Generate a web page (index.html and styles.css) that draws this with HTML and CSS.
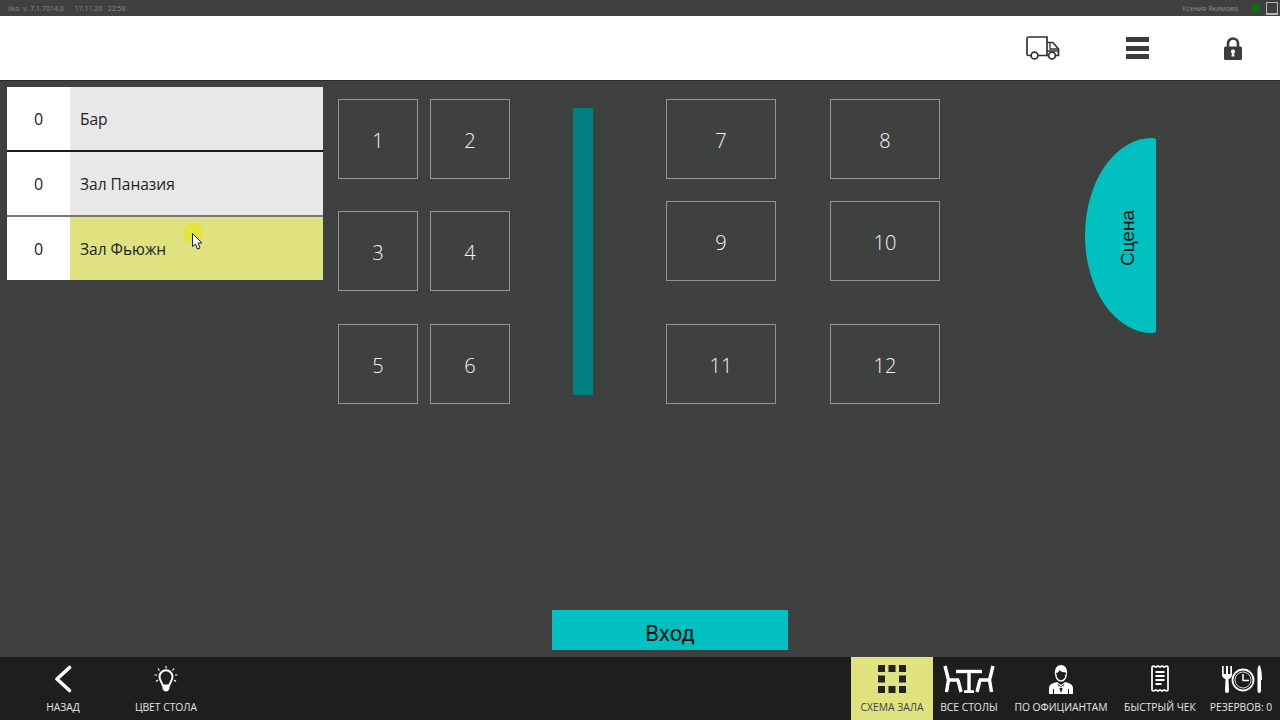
FILE: index.html
```html
<!DOCTYPE html>
<html lang="ru">
<head>
    <meta charset="UTF-8">
    <title>iiko</title>
    <link rel="stylesheet" href="styles.css">
</head>
<body>
    <div class="status-bar">
        <div class="status-left">
            <span>iiko&nbsp; v. 7.1.7014.0</span>
            <span class="status-date">17.11.20&nbsp;&nbsp; 22:58</span>
        </div>
        <div class="status-right">
            <span>Ксения Якимова</span>
            <span class="status-dot"></span>
            <span class="status-window"></span>
        </div>
    </div>

    <div class="top-bar">
        <button class="top-btn truck-btn">
            <svg width="34" height="24" viewBox="0 0 34 24" fill="none" stroke="#333" stroke-width="1.700">
                <path d="M5 19.500H2.500Q1 19.500 1 18V2.500Q1 1 2.500 1H21V19.500H12"/>
                <path d="M21 6.500H27L32.500 13V19.500H29.500M21 19.500H22"/>
                <path d="M24 7V13H32.500M21 15H32.500" stroke-width="1.300"/>
                <circle cx="8.500" cy="19.500" r="3.400"/>
                <circle cx="26" cy="19.500" r="3.400"/>
            </svg>
        </button>
        <button class="top-btn menu-btn">
            <span class="menu-line"></span>
            <span class="menu-line"></span>
            <span class="menu-line"></span>
        </button>
        <button class="top-btn lock-btn">
            <svg width="18" height="23" viewBox="0 0 18 23">
                <path d="M4 10V6.500a5 5 0 0 1 10 0V10" fill="none" stroke="#3c3c3c" stroke-width="2.600"/>
                <path fill="#3c3c3c" fill-rule="evenodd" d="M1.500 9.500h15Q18 9.500 18 11v10.500q0 1.500-1.500 1.500h-15Q0 23 0 21.500V11Q0 9.500 1.500 9.500ZM9 12.500a2 2 0 0 0-1.100 3.700L7.500 19.500h3l-.4-3.300A2 2 0 0 0 9 12.500Z"/>
            </svg>
        </button>
    </div>

    <div class="main">
        <div class="section-list">
            <div class="section-row row-dark">
                <div class="section-count">0</div>
                <div class="section-name">Бар</div>
            </div>
            <div class="section-row row-grey">
                <div class="section-count">0</div>
                <div class="section-name">Зал Паназия</div>
            </div>
            <div class="section-row">
                <div class="section-count">0</div>
                <div class="section-name selected">Зал Фьюжн</div>
            </div>
        </div>

        <!-- hall plan -->
        <div class="table t1">1</div>
        <div class="table t2">2</div>
        <div class="table t3">3</div>
        <div class="table t4">4</div>
        <div class="table t5">5</div>
        <div class="table t6">6</div>
        <div class="table wide t7">7</div>
        <div class="table wide t8">8</div>
        <div class="table wide t9">9</div>
        <div class="table wide t10">10</div>
        <div class="table wide t11">11</div>
        <div class="table wide t12">12</div>
        <div class="hall-wall"></div>
        <div class="stage"><span>Сцена</span></div>
        <div class="enter-btn">Вход</div>

        <div class="cursor-spot"></div>
        <svg class="cursor" width="11" height="17" viewBox="0 0 11 17">
            <path d="M.5.5V13.500L3.500 11 5.500 16 8 15 6 10H10Z" fill="#fff" stroke="#222" stroke-width="1"/>
        </svg>
    </div>

    <div class="bottom-bar">
        <div class="bar-item back-item">
            <svg width="18" height="28" viewBox="0 0 18 28"><path d="M15.500 2.500 3 14 15.500 25.500" fill="none" stroke="#fff" stroke-width="3.600" stroke-linecap="round" stroke-linejoin="round"/></svg>
            <span>НАЗАД</span>
        </div>
        <div class="bar-item color-item">
            <svg width="26" height="28" viewBox="0 0 26 28" fill="none" stroke="#fff">
                <path d="M13 1V3.500M5 3.500 6.500 5.500M21 3.500 19.500 5.500M1.500 10H4M22 10H24.500M3 16.500 5 15M23 16.500 21 15" stroke-width="1.200"/>
                <path d="M9.800 20.500C9 17.500 6.500 15.500 6.500 11.800A6.500 6.500 0 0 1 19.500 11.800C19.500 15.500 17 17.500 16.200 20.500Z" stroke-width="2"/>
                <path d="M9.500 20.500H16.500V23.500Q15.500 26.500 13 26.500Q10.500 26.500 9.500 23.500Z" fill="#fff" stroke="none"/>
            </svg>
            <span>ЦВЕТ СТОЛА</span>
        </div>
        <div class="bar-right">
            <div class="bar-item scheme-item active">
                <svg width="28" height="28" viewBox="0 0 28 28" fill="#222">
                    <rect x="0" y="0" width="7" height="7"/><rect x="10.500" y="0" width="7" height="7"/><rect x="21" y="0" width="7" height="7"/>
                    <rect x="0" y="10.500" width="7" height="7"/><rect x="21" y="10.500" width="7" height="7"/>
                    <rect x="0" y="21" width="7" height="7"/><rect x="10.500" y="21" width="7" height="7"/><rect x="21" y="21" width="7" height="7"/>
                </svg>
                <span>СХЕМА ЗАЛА</span>
            </div>
            <div class="bar-item tables-item">
                <svg width="52" height="28" viewBox="0 0 52 28" fill="none" stroke="#fff" stroke-width="3.400">
                    <path d="M2 1 5.500 15H16M5.500 15 3.500 27M15 15 18 27" stroke-linejoin="round"/>
                    <path d="M50 1 46.500 15H36M46.500 15 48.500 27M37 15 34 27" stroke-linejoin="round"/>
                    <path d="M13 6.500H39"/>
                    <path d="M26 6.500V27M21 27H31"/>
                </svg>
                <span>ВСЕ СТОЛЫ</span>
            </div>
            <div class="bar-item waiter-item">
                <svg width="24" height="29" viewBox="0 0 24 29">
                    <path d="M0 29V23C0 19.500 4 18 8 17L12 20 16 17C20 18 24 19.500 24 23V29Z" fill="#fff"/>
                    <path d="M8.500 18.500 12 28 15.500 18.500 12 21.500Z" fill="#1e1e1e"/>
                    <path d="M9.500 20.500 12 22 14.500 20.500V24L12 22.500 9.500 24Z" fill="#fff"/>
                    <path d="M4.500 24V29M19.500 24V29" stroke="#1e1e1e" stroke-width="1"/>
                    <path d="M6.800 9C6.800 13 9 16 12 16S17.200 13 17.200 9" fill="none" stroke="#fff" stroke-width="1.400"/>
                    <path d="M6 10C5 4 8 0 12 0S19 4 18 10L16.800 7.500C14 7.500 11.500 6.500 10.500 5C10 7 8.500 8 7.200 8Z" fill="#fff"/>
                </svg>
                <span>ПО ОФИЦИАНТАМ</span>
            </div>
            <div class="bar-item check-item">
                <svg width="18" height="27" viewBox="0 0 18 27" fill="none" stroke="#fff">
                    <path d="M1 2.500Q1 1 2.500 1L5 2 7 1 9 2 11 1 13 2 15.500 1Q17 1 17 2.500V24.500Q17 26 15.500 26L13 25 11 26 9 25 7 26 5 25 2.500 26Q1 26 1 24.500Z" stroke-width="1.700"/>
                    <path d="M4.500 7H13.500M4.500 11H13.500M4.500 15H13.500M4.500 19H10.500" stroke-width="1.800"/>
                </svg>
                <span>БЫСТРЫЙ ЧЕК</span>
            </div>
            <div class="bar-item reserve-item">
                <svg width="40" height="28" viewBox="0 0 40 28">
                    <path d="M0 1V9.500C0 12 1.500 13.500 3.500 14L3 26Q3 28 5 28T7 26L6.500 14C8.500 13.500 10 12 10 9.500V1H8.300V9H6V1H4V9H1.700V1Z" fill="#fff"/>
                    <circle cx="21" cy="15" r="10.500" fill="none" stroke="#fff" stroke-width="1.800"/>
                    <circle cx="21" cy="15" r="8" fill="none" stroke="#fff" stroke-width=".8"/>
                    <path d="M21 9V15.500H27" fill="none" stroke="#fff" stroke-width="1.500"/>
                    <path d="M37.500 0C39.500 3 40 10 40 15H39L39 26Q39 28 37.300 28T35.500 26V4Q35.500 1.500 37.500 0Z" fill="#fff"/>
                </svg>
                <span>РЕЗЕРВОВ: 0</span>
            </div>
        </div>
    </div>
</body>
</html>
```

FILE: styles.css
```css
* {
    box-sizing: border-box;
}
body {
    margin: 0;
    width: 1280px;
    height: 720px;
    overflow: hidden;
    display: flex;
    flex-direction: column;
    font-family: "Open Sans", sans-serif;
    background-color: #3f4040;
}

/* status bar */
.status-bar {
    height: 16px;
    display: flex;
    justify-content: space-between;
    align-items: center;
    padding: 0 2px 0 8px;
    background-color: #3f4040;
    color: #8a8a8a;
    font-size: 7px;
}
.status-date {
    margin-left: 9px;
}
.status-right {
    display: flex;
    align-items: center;
}
.status-dot {
    width: 9px;
    height: 9px;
    margin-left: 13px;
    border-radius: 50%;
    background-color: #0b6e12;
}
.status-window {
    width: 12px;
    height: 13px;
    margin-left: 6px;
    border: 1px solid #b5b5b5;
    border-bottom-width: 2px;
}

/* white bar */
.top-bar {
    height: 64px;
    display: flex;
    justify-content: flex-end;
    align-items: center;
    background-color: #fff;
}
.top-btn {
    display: flex;
    flex-direction: column;
    justify-content: space-between;
    padding: 0;
    border: none;
    background: none;
}
.truck-btn {
    margin-right: 66px;
}
.menu-btn {
    width: 23px;
    height: 22px;
    margin-right: 75px;
}
.menu-line {
    height: 5px;
    background-color: #3c3c3c;
}
.lock-btn {
    margin-right: 38px;
}

/* main area */
.main {
    flex: 1;
    position: relative;
    padding: 7px;
    box-shadow: inset 0 1px 0 #2b2b2b;
}
.section-list {
    width: 316px;
    display: flex;
    flex-direction: column;
}
.section-row {
    height: 63px;
    display: flex;
}
.row-dark {
    height: 65px;
    border-bottom: 2px solid #1c1c1c;
}
.row-grey {
    height: 65px;
    border-bottom: 2px solid #777;
}
.section-count {
    width: 63px;
    display: flex;
    align-items: center;
    justify-content: center;
    background-color: #fff;
    color: #222;
    font-size: 16px;
}
.section-name {
    flex: 1;
    display: flex;
    align-items: center;
    padding-left: 10px;
    background-color: #e8e8e8;
    color: #222;
    font-size: 15.500px;
}
.section-name.selected {
    background-color: #dfe27f;
}

/* hall plan */
.table {
    position: absolute;
    width: 80px;
    height: 80px;
    display: flex;
    align-items: center;
    justify-content: center;
    padding-top: 2px;
    border: 1px solid #959595;
    color: #f6f6f6;
    font-size: 20px;
    font-weight: 300;
}
.table.wide {
    width: 110px;
}
.t1 { left: 338px; top: 19px; }
.t2 { left: 430px; top: 19px; }
.t3 { left: 338px; top: 131px; }
.t4 { left: 430px; top: 131px; }
.t5 { left: 338px; top: 244px; }
.t6 { left: 430px; top: 244px; }
.t7 { left: 666px; top: 19px; }
.t8 { left: 830px; top: 19px; }
.t9 { left: 666px; top: 121px; }
.t10 { left: 830px; top: 121px; }
.t11 { left: 666px; top: 244px; }
.t12 { left: 830px; top: 244px; }
.hall-wall {
    position: absolute;
    left: 573px;
    top: 28px;
    width: 20px;
    height: 287px;
    background-color: #008080;
}
.stage {
    position: absolute;
    left: 1085px;
    top: 58px;
    width: 71px;
    height: 195px;
    display: flex;
    align-items: center;
    justify-content: flex-end;
    padding-right: 17px;
    border-radius: 67px 4px 4px 67px / 97.500px 2px 2px 97.500px;
    background-color: #00c0c0;
    color: #111;
    font-family: "Liberation Sans", sans-serif;
    font-size: 19px;
}
.stage span {
    margin-top: 6px;
    writing-mode: vertical-rl;
    transform: rotate(180deg);
}
.enter-btn {
    position: absolute;
    left: 552px;
    top: 530px;
    width: 236px;
    height: 40px;
    padding-top: 10px;
    text-align: center;
    background-color: #00c0c0;
    color: #111;
    font-family: "Roboto", sans-serif;
    font-size: 22px;
    line-height: 28px;
}
.cursor-spot {
    position: absolute;
    left: 183px;
    top: 143px;
    width: 20px;
    height: 20px;
    border-radius: 50%;
    background-color: #e6e43a;
}
.cursor {
    position: absolute;
    left: 192px;
    top: 153px;
}

/* bottom bar */
.bottom-bar {
    height: 63px;
    display: flex;
    padding-right: 1px;
    background-color: #1e1e1e;
}
.bar-right {
    display: flex;
    margin-left: auto;
}
.bar-item {
    display: flex;
    flex-direction: column;
    align-items: center;
    padding-top: 8px;
    color: #e4e4e4;
    font-size: 10.300px;
    white-space: nowrap;
}
.bar-item svg {
    flex-shrink: 0;
}
.bar-item span {
    margin-top: 7px;
    line-height: 15px;
}
.waiter-item span {
    margin-top: 6px;
}
.check-item span {
    margin-top: 8px;
}
.reserve-item svg {
    margin-left: 2px;
}
.back-item { width: 126px; }
.color-item { width: 80px; }
.scheme-item { width: 82px; }
.tables-item { width: 72px; }
.waiter-item { width: 112px; }
.check-item { width: 86px; }
.reserve-item { width: 76px; }
.bar-item.active {
    background-color: #dfe27f;
    color: #444;
}
```
